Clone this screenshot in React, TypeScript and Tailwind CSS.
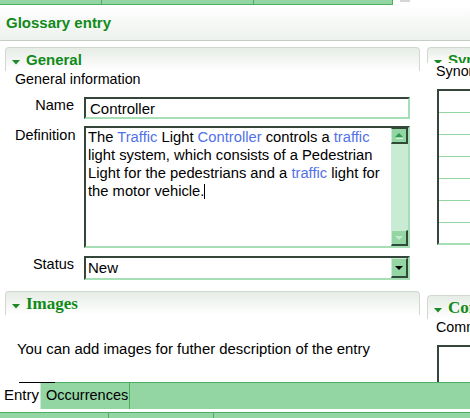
import React from "react";

function Tri() {
  return (
    <svg width="8" height="5" viewBox="0 0 8 5">
      <path d="M0 0h8L4 4.5z" fill="#1b8a26" />
    </svg>
  );
}

function SectionHead({ title, serif }: { title: string; serif?: boolean }) {
  return (
    <div className="h-[24px] rounded-t-[4px] border border-b-0 border-[#d0d8d0] bg-linear-to-b from-[#e6ece6] to-white flex items-start pt-[3px] overflow-hidden whitespace-nowrap">
      <div className="w-[20px] pl-[6px] pt-[9px] shrink-0">
        <Tri />
      </div>
      {serif ? (
        <span className="font-['Liberation_Serif',serif] font-bold text-[17px] leading-[18px] text-[#108a18]">
          {title}
        </span>
      ) : (
        <span className="font-bold text-[15px] leading-[18px] text-[#108a18]">{title}</span>
      )}
    </div>
  );
}

const blue = "text-[#5271ea]";

export default function App() {
  return (
    <div className="w-[470px] h-[418px] overflow-hidden bg-white flex flex-col font-['Liberation_Sans',Arial,sans-serif] text-black">
      {/* clipped view tabs above */}
      <div className="h-[5px] flex shrink-0">
        <div className="w-[393px] h-[5px] bg-[#93d5a3] border-b border-r border-[#4cae60] flex">
          <div className="w-[102px] border-r border-[#4cae60]" />
          <div className="w-[152px] border-r border-[#4cae60]" />
        </div>
        <div className="ml-[7px] w-[10px] h-[2px] bg-[#d6d6d6]" />
      </div>

      {/* form title */}
      <div className="h-[36px] shrink-0 border-b border-[#c5cdc5] bg-linear-to-b from-white to-[#edf1ed] flex items-center pl-[6px] pt-[1px]">
        <span className="font-bold text-[15px] leading-[18px] text-[#108a18]">Glossary entry</span>
      </div>

      {/* body */}
      <div className="flex-1 flex pt-[6px] overflow-hidden">
        {/* left column */}
        <div className="w-[415px] ml-[5px] shrink-0 flex flex-col">
          <SectionHead title="General" />
          <div className="pl-[10px] text-[14.3px] leading-[17px]">General information</div>

          <div className="mt-[9px] flex items-start pl-[10px]">
            <div className="w-[59px] text-right text-[14.5px] leading-[17px]">Name</div>
            <div className="ml-[10px] w-[326px] h-[22px] border-2 border-[#34463a] border-r-[#a6dfb6] border-b-[#a6dfb6] pl-[4px] pt-[1px] text-[15px] leading-[18px]">
              Controller
            </div>
          </div>

          <div className="mt-[7px] flex items-start pl-[10px]">
            <div className="w-[59px] text-right text-[14.5px] leading-[17px] pt-[1px]">Definition</div>
            <div className="ml-[10px] w-[326px] h-[122px] border-2 border-[#34463a] border-r-[#a6dfb6] border-b-[#a6dfb6] flex">
              <div className="flex-1 pl-[2px] pt-0 text-[14.75px] leading-[18px] whitespace-nowrap">
                The <span className={blue}>Traffic</span> Light <span className={blue}>Controller</span> controls a{" "}
                <span className={blue}>traffic</span>
                <br />
                light system, which consists of a Pedestrian
                <br />
                Light for the pedestrians and a <span className={blue}>traffic</span> light for
                <br />
                the motor vehicle.
                <span className="inline-block w-px h-[15px] bg-black align-[-3px]" />
              </div>
              <div className="w-[17px] bg-[#c9ebd3] flex flex-col justify-between">
                <div className="h-[16px] bg-[#93d5a3] border border-[#2f4a37] border-l-[#c9ebd3] border-r-2 border-b-2 flex flex-col items-center justify-center gap-[1px]">
                  <svg width="8" height="4" viewBox="0 0 8 4">
                    <path d="M0 4h8L4 0z" fill="#2f9a4c" />
                  </svg>
                  <div className="w-[7px] h-px bg-[#d8f2de]" />
                </div>
                <div className="h-[16px] bg-[#93d5a3] border border-[#2f4a37] border-l-[#c9ebd3] border-t-[#c9ebd3] border-r-2 border-b-2 flex items-center justify-center">
                  <svg width="8" height="4" viewBox="0 0 8 4">
                    <path d="M0 0h8L4 4z" fill="#c3ead0" />
                  </svg>
                </div>
              </div>
            </div>
          </div>

          <div className="mt-[8px] flex items-start pl-[10px]">
            <div className="w-[59px] text-right text-[14.5px] leading-[17px]">Status</div>
            <div className="ml-[10px] w-[326px] h-[24px] border-2 border-[#34463a] border-r-[#a6dfb6] border-b-[#a6dfb6] flex">
              <div className="flex-1 pl-[2px] pt-[1px] text-[15px] leading-[18px]">New</div>
              <div className="w-[17px] h-[20px] bg-[#93d5a3] border border-[#c9ebd3] border-r-2 border-b-2 border-r-[#2f4a37] border-b-[#2f4a37] flex items-center justify-center">
                <svg width="8" height="4" viewBox="0 0 8 4">
                  <path d="M0 0h8L4 4z" fill="#000" />
                </svg>
              </div>
            </div>
          </div>

          <div className="mt-[11px]">
            <SectionHead title="Images" serif />
          </div>
          <div className="mt-[25px] pl-[12px] text-[14.9px] leading-[18px] whitespace-nowrap">
            You can add images for futher description of the entry
          </div>
        </div>

        {/* right column, clipped */}
        <div className="ml-[7px] w-[200px] shrink-0 flex flex-col">
          <SectionHead title="Synonyms" />
          <div className="pl-[9px] text-[14.3px] leading-[17px] whitespace-nowrap">Synonyms</div>
          <div className="mt-[9px] ml-[10px] border-2 border-[#34463a] border-r-[#a6dfb6] border-b-[#a6dfb6] flex flex-col">
            {[0, 1, 2, 3, 4, 5].map((i) => (
              <div key={i} className="h-[22px] border-b border-[#93d5a3]" />
            ))}
            <div className="h-[20px]" />
          </div>
          <div className="mt-[50px]">
            <SectionHead title="Comments" serif />
          </div>
          <div className="pl-[9px] text-[14.3px] leading-[17px] whitespace-nowrap">Comments</div>
          <div className="mt-[9px] ml-[10px] h-[60px] border-2 border-[#34463a] border-r-[#a6dfb6] border-b-0" />
        </div>
      </div>

      {/* editor page tabs */}
      <div className="relative h-[27px] shrink-0 flex bg-[#93d5a3] border-t border-[#4cae60]">
        <div className="absolute left-[19px] -top-px w-[36px] h-px bg-black" />
        <div className="w-[41px] -mt-px h-[27px] bg-white border-r border-[#c9ebd3] pl-[4px] pt-[4px] text-[15px] leading-[18px]">
          Entry
        </div>
        <div className="w-[89px] border-r border-[#4cae60] pl-[5px] pt-[3px] text-[14.5px] leading-[18px]">
          Occurrences
        </div>
      </div>
      <div className="h-[3px] shrink-0 bg-white" />
      <div className="h-[6px] shrink-0 bg-[#93d5a3] border-t border-[#4cae60] flex">
        <div className="w-[109px] border-r border-[#4cae60]" />
        <div className="w-[105px] border-r border-[#4cae60]" />
      </div>
    </div>
  );
}
